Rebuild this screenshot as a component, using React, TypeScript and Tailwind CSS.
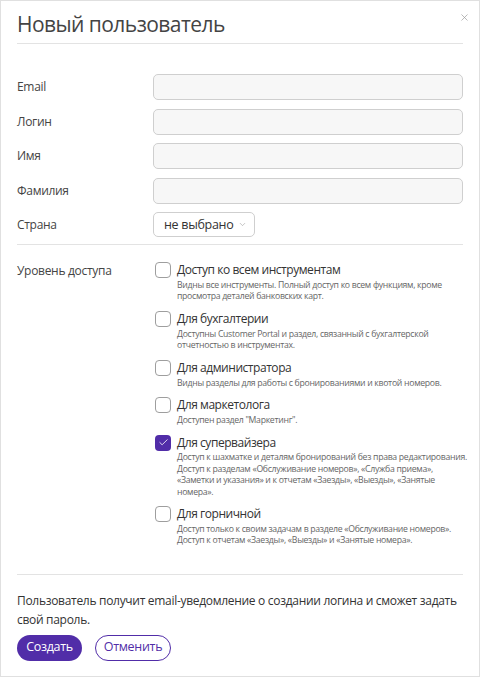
import { Check, ChevronDown, X } from 'lucide-react';

const roles = [
  {
    title: 'Доступ ко всем инструментам',
    lines: ['Видны все инструменты. Полный доступ ко всем функциям, кроме', 'просмотра деталей банковских карт.'],
    checked: false,
  },
  {
    title: 'Для бухгалтерии',
    lines: ['Доступны Customer Portal и раздел, связанный с бухгалтерской', 'отчетностью в инструментах.'],
    checked: false,
  },
  {
    title: 'Для администратора',
    lines: ['Видны разделы для работы с бронированиями и квотой номеров.'],
    checked: false,
  },
  {
    title: 'Для маркетолога',
    lines: ['Доступен раздел "Маркетинг".'],
    checked: false,
  },
  {
    title: 'Для супервайзера',
    lines: [
      'Доступ к шахматке и деталям бронирований без права редактирования.',
      'Доступ к разделам «Обслуживание номеров», «Служба приема»,',
      '«Заметки и указания» и к отчетам «Заезды», «Выезды», «Занятые',
      'номера».',
    ],
    checked: true,
  },
  {
    title: 'Для горничной',
    lines: [
      'Доступ только к своим задачам в разделе «Обслуживание номеров».',
      'Доступ к отчетам «Заезды», «Выезды» и «Занятые номера».',
    ],
    checked: false,
  },
];

const fields = ['Email', 'Логин', 'Имя', 'Фамилия'];

export default function App() {
  return (
    <div className="relative w-[480px] h-[677px] bg-white border border-[#e0e0e0] px-4 font-['Open_Sans',sans-serif] text-[#333]">
      {/* Close */}
      <button className="absolute top-[11px] right-[9px] text-[#9a9a9a]">
        <X className="w-[11px] h-[11px]" strokeWidth={1.5} />
      </button>

      {/* Header */}
      <h1 className="pt-[8px] h-[43px] text-[21px] leading-[30px] tracking-[-0.55px] text-[#444] border-b border-[#e3e3e3]">
        Новый пользователь
      </h1>

      {/* Fields */}
      <div className="pt-[30px] flex flex-col gap-[8.6px]">
        {fields.map((f) => (
          <div key={f} className="flex items-center">
            <label className="w-[136px] shrink-0 text-[12px] tracking-[-0.3px] text-[#444]">{f}</label>
            <input className="flex-1 h-[26px] rounded-[5px] border border-[#cfcfcf] bg-[#f7f7f7]" />
          </div>
        ))}
        <div className="flex items-center">
          <label className="w-[136px] shrink-0 text-[12px] tracking-[-0.3px] text-[#444]">Страна</label>
          <div className="h-[25px] w-[102px] whitespace-nowrap rounded-[5px] border border-[#cfcfcf] flex items-center pl-[10px] gap-[5px] text-[12.5px] tracking-[-0.3px] text-[#333]">
            не выбрано
            <ChevronDown className="w-[9px] h-[9px] text-[#999]" strokeWidth={1.5} />
          </div>
        </div>
      </div>

      <div className="mt-[7px] border-t border-[#e3e3e3]" />

      {/* Roles */}
      <div className="flex pt-[17px]">
        <div className="w-[138px] shrink-0 text-[12px] leading-[16px] tracking-[-0.3px] text-[#444] pt-[1px]">
          Уровень доступа
        </div>
        <div className="flex-1 min-w-0 flex flex-col gap-[8.5px]">
          {roles.map((r) => (
            <div key={r.title} className="flex gap-[6px]">
              <div
                className={
                  r.checked
                    ? 'w-[16px] h-[16px] rounded-[4px] bg-[#512da8] flex items-center justify-center shrink-0'
                    : 'w-[16px] h-[16px] rounded-[4px] border border-[#9e9e9e] bg-white shrink-0'
                }
              >
                {r.checked && <Check className="w-[11px] h-[11px] text-white" strokeWidth={1.75} />}
              </div>
              <div className="flex-1 min-w-0">
                <div className="text-[12px] leading-[16px] tracking-[-0.45px] text-[#333]">{r.title}</div>
                <div className="mt-[1.5px] text-[8.7px] leading-[11.4px] tracking-[-0.3px] text-[#666] whitespace-nowrap">
                  {r.lines.map((l) => (
                    <div key={l}>{l}</div>
                  ))}
                </div>
              </div>
            </div>
          ))}
        </div>
      </div>

      <div className="mt-[27px] border-t border-[#e3e3e3]" />

      {/* Footer */}
      <p className="mt-[16px] text-[12px] leading-[19px] tracking-[-0.3px] text-[#333] whitespace-nowrap">
        Пользователь получит email-уведомление о создании логина и сможет задать
        <br />
        свой пароль.
      </p>
      <div className="mt-[6px] flex gap-[13px]">
        <button className="h-[26px] w-[65px] rounded-full bg-[#512da8] text-white text-[12.5px] tracking-[-0.3px]">
          Создать
        </button>
        <button className="h-[26px] w-[76px] rounded-full border border-[#512da8] text-[#512da8] text-[12.5px] tracking-[-0.3px]">
          Отменить
        </button>
      </div>
    </div>
  );
}
